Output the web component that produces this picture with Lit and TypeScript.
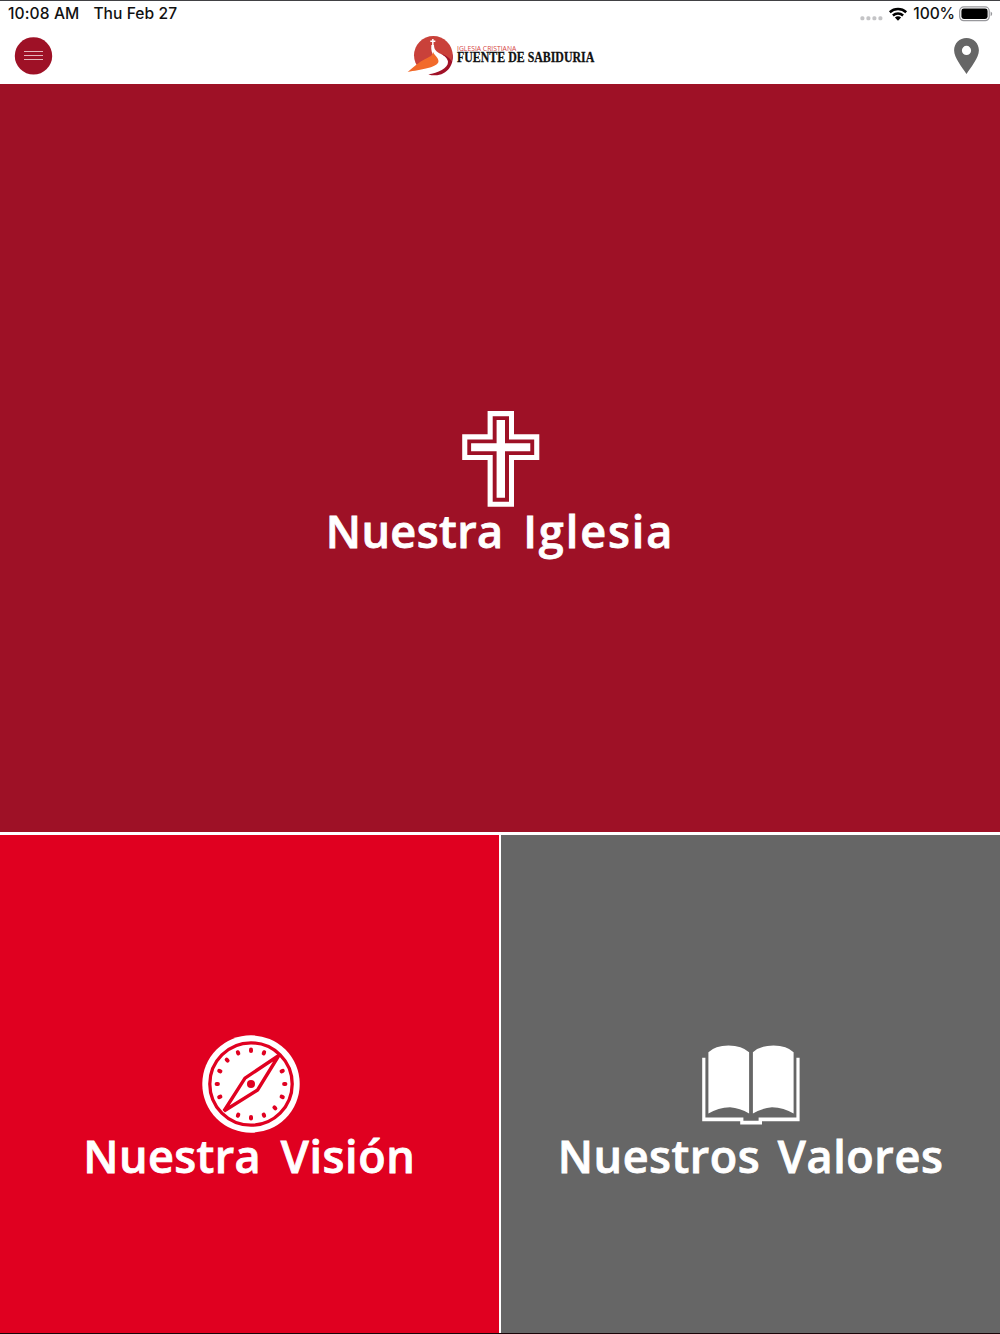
import { LitElement, html, svg, css } from "lit";
import { customElement, property } from "lit/decorators.js";

const compassTicks = Array.from({ length: 16 }, (_, i) => i * 22.5).filter((a) => a !== 45 && a !== 225);

const crossIcon = html`<svg class="icon" viewBox="0 0 98 98" width="98" height="98">
  <path fill="#fff" fill-rule="evenodd" d="M36.6 1H63V24.2H88.3V50H63V96.8H36.6V50H11.2V24.2H36.6ZM41.7 6.2V29.5H16.3V45H41.7V91.8H58V45H83.2V29.5H58V6.2Z"/>
  <path fill="#fff" d="M45.6 10H54V33.3H79.3V41.2H54V87.8H45.6V41.2H20.1V33.3H45.6Z"/>
</svg>`;

const compassIcon = html`<svg class="icon compass" viewBox="0 0 98 98" width="98" height="98">
  <circle cx="49" cy="49" r="48.7" fill="#fff"/>
  <g class="cut">
    <circle cx="49" cy="49" r="41.2" fill="none" stroke-width="3.3"/>
    <path d="M76.8 20.5L55.6 55L22 76L43 43.2Z" fill="none" stroke-width="3.4"/>
    ${compassTicks.map((a) => svg`<path d="M49 14.6V15.9" stroke-width="4" stroke-linecap="round" transform=${`rotate(${a} 49 49)`}/>`)}
  </g>
  <circle class="hub" cx="49" cy="49" r="4"/>
</svg>`;

const bookIcon = html`<svg class="icon" viewBox="0 0 98 98" width="98" height="98">
  <g fill="#fff">
    <path d="M6.4 17.2Q13 10.5 26.5 10.4Q40 10.5 47.1 17.2V78.6Q38 73 28 72.3Q16 72.6 6.4 78.6Z"/>
    <path d="M50.9 17.2Q58 10.5 71.5 10.4Q85 10.5 91.6 17.2V78.6Q82 72.6 70 72.3Q60 73 50.9 78.6Z"/>
    <path d="M0.2 22.8H3.4V82.6H41.4V85.8H56.6V82.6H94.4V22.8H97.6V86.2H60V89.4H38.2V86.2H0.2Z"/>
  </g>
</svg>`;

@customElement("menu-tile")
class MenuTile extends LitElement {
  @property() label = "";
  @property({ attribute: false }) icon: unknown;

  static styles = css`
    :host { display: flex; flex-direction: column; align-items: center; justify-content: center; min-width: 0; color: #fff; }
    .icon { display: block; flex: none; }
    .compass { margin-left: 2.6px; }
    .cut { stroke: var(--tile); }
    .hub { fill: var(--tile); }
    .title {
      height: 52px; overflow: var(--clip, visible); white-space: pre; font: 600 45px/46px "Open Sans", sans-serif;
      -webkit-text-stroke: 0.8px #fff; word-spacing: var(--gap);
    }
    .first { letter-spacing: var(--track-first); }
    .last { letter-spacing: var(--track-last); }
  `;

  render() {
    const [first, last] = this.label.split(" ");
    return html`${this.icon}<div class="title"><span class="first">${first}</span> <span class="last">${last}</span></div>`;
  }
}

@customElement("app-root")
class AppRoot extends LitElement {
  static styles = css`
    :host { display: block; }
    * { box-sizing: border-box; }
    svg { display: block; }
    .screen { height: 1334px; display: flex; flex-direction: column; background: #fff; border-top: 1px solid #414144; border-bottom: 1px solid #1a0508; overflow: hidden; }
    .status { height: 26px; flex: none; display: flex; align-items: center; padding: 0 7px 0 8px; color: #111; font: 500 15.6px/26px Inter, sans-serif; white-space: pre; }
    .clock { width: 85.4px; letter-spacing: 0.1px; }
    .date { flex: 1; letter-spacing: 0.05px; }
    .signals { display: flex; align-items: center; }
    .percent { margin: 0 4px 0 5px; letter-spacing: -0.1px; }
    .header { height: 57px; flex: none; display: grid; grid-template-columns: 1fr auto 1fr; align-items: center; padding: 0 20px 0 14px; }
    .pin { justify-self: end; }
    .logo { margin-left: 5px; margin-right: -5px; }
    .tiles { flex: 1; display: grid; grid-template-columns: 1fr 1fr; grid-template-rows: 748px 1fr; gap: 2.6px; }
    .church { --tile: #9e1126; --track-first: 0.4px; --track-last: 1.9px; --gap: 8px; --clip: hidden; grid-column: 1 / -1; background: var(--tile); padding-top: 53px; }
    .vision { --tile: #e00020; --track-first: 0.4px; --track-last: 0.6px; --gap: 8px; background: var(--tile); padding-top: 52px; }
    .values { --tile: #666; --track-first: 0.5px; --track-last: 0.6px; --gap: 6px; background: var(--tile); padding-top: 52px; }
  `;

  render() {
    return html`
      <div class="screen">
        <div class="status">
          <span class="clock">10:08 AM</span>
          <span class="date">Thu Feb 27</span>
          <div class="signals">
            <svg viewBox="0 0 48 20" width="48" height="20">
              <g fill="#c4c4c6">${[0, 6, 12, 18].map((x) => svg`<rect x=${x + 0.4} y="12.2" width="4" height="4" rx="1.5"/>`)}</g>
              <g fill="none" stroke="#000" stroke-width="2.5">
                <path d="M29.8 8.2A12.2 12.2 0 0 1 46.2 8.2"/>
                <path d="M32.9 11.5A7.8 7.8 0 0 1 43.1 11.5"/>
              </g>
              <path d="M38 16.7L34.9 13.6A4.5 4.5 0 0 1 41.1 13.6Z"/>
            </svg>
            <span class="percent">100%</span>
            <svg viewBox="0 0 34 16" width="34" height="16">
              <rect x="0.7" y="0.9" width="29.5" height="13.8" rx="4" fill="none" stroke="#98989c" stroke-width="1.2"/>
              <rect x="2.4" y="2.6" width="26.2" height="10.4" rx="2.4"/>
              <path d="M31.6 5.4Q33.2 6.2 33.2 7.8Q33.2 9.4 31.6 10.2Z" fill="#98989c"/>
            </svg>
          </div>
        </div>
        <div class="header">
          <svg viewBox="0 0 39 39" width="39" height="39">
            <circle cx="19.5" cy="19.9" r="18.7" fill="#9e1126"/>
            <path d="M10 15.5H29M10 19.5H29M10 23.5H29" stroke="#e5b5bc" stroke-width="1"/>
          </svg>
          <svg class="logo" viewBox="20 12 570 138" width="190" height="46">
            <circle cx="99" cy="79" r="58" fill="#c9413a"/>
            <path fill="#fff" d="M93 48H101C101 66 112 70 128 78C152 90 160 104 142 120C122 140 92 146 76 138L40 122C70 112 100 104 104 96C108 84 90 78 93 48Z"/>
            <path fill="#f26a2a" d="M22 129C40 114 55 99 76 89C86 84 98 80 98 68C102 80 118 88 114 100C106 117 62 122 22 129Z"/>
            <path fill="#a01127" d="M156 72C163 104 142 139 104 139C96 139 90 139 84 136C112 132 144 118 143 98C142 88 132 80 122 74C136 78 148 86 154 96Z"/>
            <path d="M97.5 30V51M90 37H105" stroke="#fff" stroke-width="4.4"/>
            <text x="170" y="66" font-family="Open Sans" font-size="20" fill="#d5453f" textLength="178" lengthAdjust="spacingAndGlyphs">IGLESIA CRISTIANA</text>
            <text x="170" y="100" font-family="Liberation Serif" font-weight="700" font-size="43" fill="#111" stroke="#111" stroke-width="0.8" textLength="412" lengthAdjust="spacingAndGlyphs">FUENTE DE SABIDURIA</text>
          </svg>
          <svg class="pin" viewBox="0 0 27 38" width="27" height="38">
            <path fill="#666" fill-rule="evenodd" d="M13.5 1C20.5 1 25.9 6.3 25.9 13.3C25.9 21 18 30 13.5 37C9 30 1.1 21 1.1 13.3C1.1 6.3 6.5 1 13.5 1ZM13.5 8.8A4.6 4.6 0 1 0 13.5 18A4.6 4.6 0 1 0 13.5 8.8Z"/>
          </svg>
        </div>
        <div class="tiles">
          <menu-tile class="church" label="Nuestra Iglesia" .icon=${crossIcon}></menu-tile>
          <menu-tile class="vision" label="Nuestra Visión" .icon=${compassIcon}></menu-tile>
          <menu-tile class="values" label="Nuestros Valores" .icon=${bookIcon}></menu-tile>
        </div>
      </div>
    `;
  }
}
